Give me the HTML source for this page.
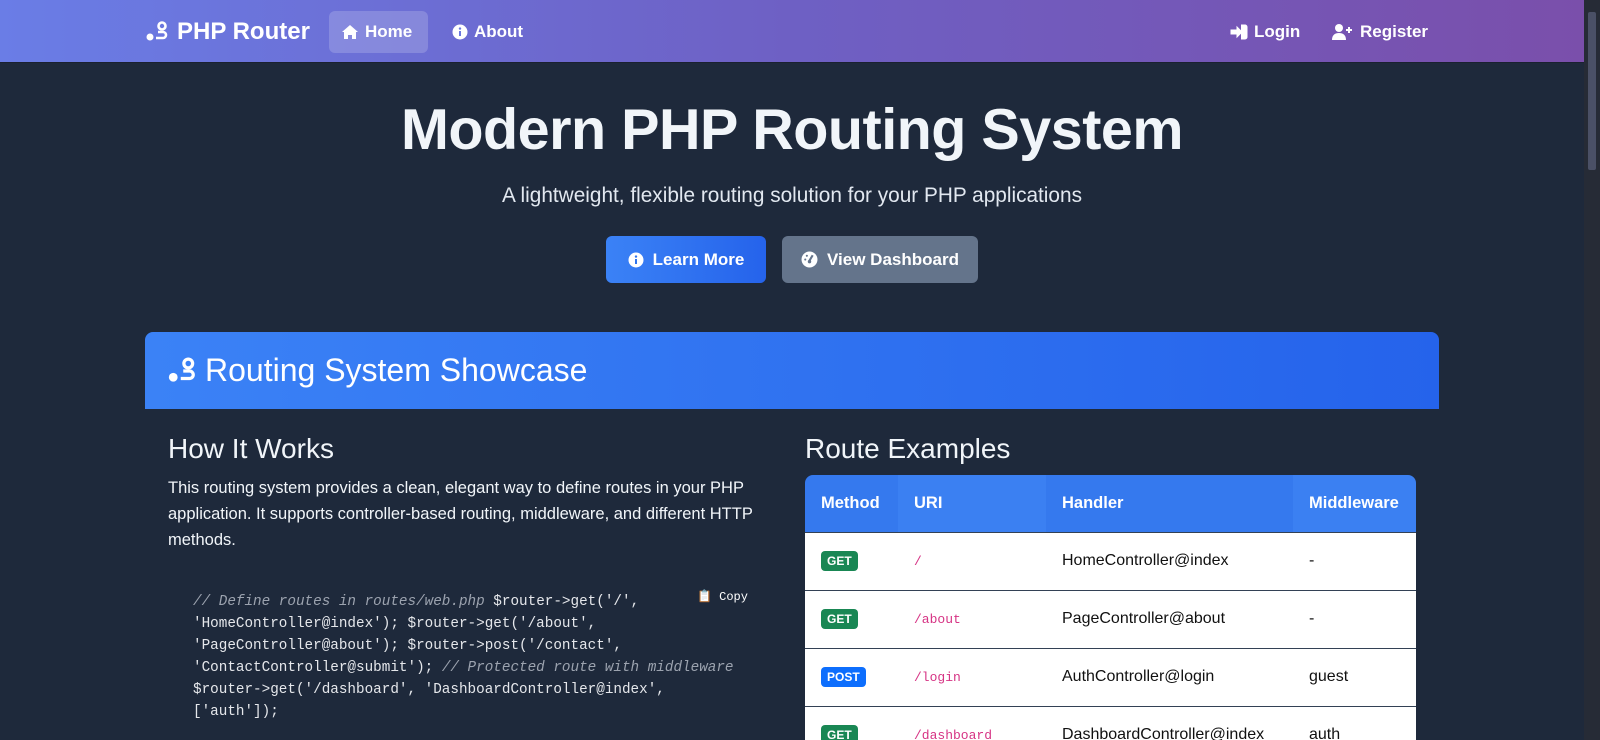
<!DOCTYPE html>
<html><head><meta charset="utf-8"><style>
*{box-sizing:border-box;margin:0;padding:0}
html,body{width:1600px;height:740px;overflow:hidden;background:#1f2937}
body{font-family:"Liberation Sans",Arial,sans-serif;color:#f1f5f9;position:relative}
.page{position:absolute;left:0;top:0;width:1584px;height:740px;background:#1e293b;overflow:hidden}
.sb{position:absolute;left:1584px;top:0;width:16px;height:740px;background:#262b36}
.sb .th{position:absolute;left:4px;top:12px;width:8px;height:158px;background:#4a5066;border-radius:2px}
nav{height:63px;background:linear-gradient(90deg,#6a7de6,#6e60c4 50%,#7a4fab);position:relative;border-bottom:1px solid #1b2130}
.brand{position:absolute;left:145px;top:18px;font-size:24px;font-weight:bold;color:#fff;display:flex;align-items:center;gap:8px}
.nl{position:absolute;top:11px;height:42px;display:flex;align-items:center;gap:6px;font-size:17px;font-weight:bold;color:#fff;padding:0 12px;border-radius:6px}
h1{position:absolute;left:0;width:1584px;text-align:center;top:97px;font-size:57.5px;font-weight:bold;color:#f1f5f9;letter-spacing:-0.5px}
.sub{position:absolute;left:0;width:1584px;text-align:center;top:184px;font-size:20.8px;color:#e2e8f0}
.btn{position:absolute;top:236px;height:47px;border-radius:6px;display:flex;align-items:center;justify-content:center;gap:9px;font-size:17px;font-weight:bold;color:#fff}
.card{position:absolute;left:145px;top:332px;width:1294px;height:420px;border-radius:8px;overflow:hidden;background:#1e293b}
.ch{height:77px;background:linear-gradient(90deg,#3b82f6,#2563eb);display:flex;align-items:center;padding-left:22px;gap:8px;font-size:32px;color:#fff}
h2{position:absolute;font-size:28px;font-weight:normal;color:#f1f5f9}
.p{position:absolute;left:23px;top:143px;width:600px;font-size:16.5px;line-height:26px;color:#f1f5f9}
.code{position:absolute;left:48px;top:259px;width:560px;font-family:"Liberation Mono",monospace;font-size:14.3px;line-height:22px;color:#e5e7eb}
.code i{color:#9ca3af}
.copy{position:absolute;left:552px;top:257px;font-family:"Liberation Mono",monospace;font-size:12px;color:#fff}
table{position:absolute;left:660px;top:143px;width:611px;border-collapse:collapse;font-size:16px}
th{height:57px;text-align:left;padding-left:16px;color:#fff;font-size:16.5px;background:#3579ee}
th:nth-child(2),th:nth-child(4){background:#3b80f2}
td{height:58px;background:#fff;color:#111;padding-left:16px;border-top:1px solid #334155}
.b{display:inline-block;font-size:12px;font-weight:bold;color:#fff;padding:3px 6px;border-radius:4px;background:#198754}
.b.p2{background:#0d6efd}
.u{font-family:"Liberation Mono",monospace;font-size:13px;color:#d63384}
</style></head><body>
<div class="page">
<nav>
 <div class="brand"><svg width="24" height="22" viewBox="0 0 24 22"><circle cx="17" cy="5" r="3.5" fill="none" stroke="#fff" stroke-width="2.6"/><circle cx="5" cy="16" r="3.5" fill="#fff"/><path d="M13 11h5a3 3 0 010 6h-7" fill="none" stroke="#fff" stroke-width="2.6"/></svg>PHP Router</div>
 <div class="nl" style="left:329px;width:99px;background:rgba(255,255,255,.18)"><svg width="18" height="16" viewBox="0 0 18 16"><path d="M9 1L1 8h2v7h4v-4h4v4h4V8h2z" fill="#fff"/></svg>Home</div>
 <div class="nl" style="left:440px"><svg width="16" height="16" viewBox="0 0 16 16"><circle cx="8" cy="8" r="7.5" fill="#fff"/><rect x="7" y="7" width="2" height="5" fill="#6a78e0"/><circle cx="8" cy="4.6" r="1.2" fill="#6a78e0"/></svg>About</div>
 <div class="nl" style="left:1218px"><svg width="18" height="16" viewBox="0 0 18 16"><path d="M1 6h6V3l5 5-5 5v-3H1z M11 1h4a2 2 0 012 2v10a2 2 0 01-2 2h-4" fill="#fff" stroke="#fff" stroke-width="1"/></svg>Login</div>
 <div class="nl" style="left:1320px"><svg width="22" height="16" viewBox="0 0 22 16"><circle cx="7" cy="4" r="4" fill="#fff"/><path d="M0 16c0-5 3-7 7-7s7 2 7 7z" fill="#fff"/><path d="M17 3v6M14 6h6" stroke="#fff" stroke-width="2"/></svg>Register</div>
</nav>
<h1>Modern PHP Routing System</h1>
<div class="sub">A lightweight, flexible routing solution for your PHP applications</div>
<div class="btn" style="left:606px;width:160px;background:linear-gradient(90deg,#3b82f6,#2563eb)"><svg width="16" height="16" viewBox="0 0 16 16"><circle cx="8" cy="8" r="7.5" fill="#fff"/><rect x="7" y="7" width="2" height="5" fill="#2f74ee"/><circle cx="8" cy="4.6" r="1.2" fill="#2f74ee"/></svg>Learn More</div>
<div class="btn" style="left:782px;width:196px;background:#64748b"><svg width="17" height="17" viewBox="0 0 16 16"><circle cx="8" cy="8" r="7.5" fill="#fff"/><path d="M8 9l3-5" stroke="#64748b" stroke-width="2"/><circle cx="8" cy="10" r="1.6" fill="#64748b"/><circle cx="4" cy="8" r="1" fill="#64748b"/><circle cx="5.5" cy="4.5" r="1" fill="#64748b"/></svg>View Dashboard</div>
<div class="card">
 <div class="ch"><svg width="30" height="28" viewBox="0 0 24 22"><circle cx="17" cy="5" r="3.5" fill="none" stroke="#fff" stroke-width="2.6"/><circle cx="5" cy="16" r="3.5" fill="#fff"/><path d="M13 11h5a3 3 0 010 6h-7" fill="none" stroke="#fff" stroke-width="2.6"/></svg>Routing System Showcase</div>
 <h2 style="left:23px;top:101px">How It Works</h2>
 <div class="p">This routing system provides a clean, elegant way to define routes in your PHP application. It supports controller-based routing, middleware, and different HTTP methods.</div>
 <div class="copy">📋 Copy</div>
 <div class="code"><i>// Define routes in routes/web.php</i> $router-&gt;get('/', 'HomeController@index'); $router-&gt;get('/about', 'PageController@about'); $router-&gt;post('/contact', 'ContactController@submit'); <i>// Protected route with middleware</i> $router-&gt;get('/dashboard', 'DashboardController@index', ['auth']);</div>
 <h2 style="left:660px;top:101px">Route Examples</h2>
 <table>
  <tr><th style="width:93px;border-top-left-radius:8px">Method</th><th style="width:148px">URI</th><th style="width:247px">Handler</th><th style="border-top-right-radius:8px">Middleware</th></tr>
  <tr><td><span class="b">GET</span></td><td class="u">/</td><td>HomeController@index</td><td>-</td></tr>
  <tr><td><span class="b">GET</span></td><td class="u">/about</td><td>PageController@about</td><td>-</td></tr>
  <tr><td><span class="b p2">POST</span></td><td class="u">/login</td><td>AuthController@login</td><td>guest</td></tr>
  <tr><td><span class="b">GET</span></td><td class="u">/dashboard</td><td>DashboardController@index</td><td>auth</td></tr>
 </table>
</div>
</div>
<div class="sb"><div class="th"></div></div>
</body></html>
